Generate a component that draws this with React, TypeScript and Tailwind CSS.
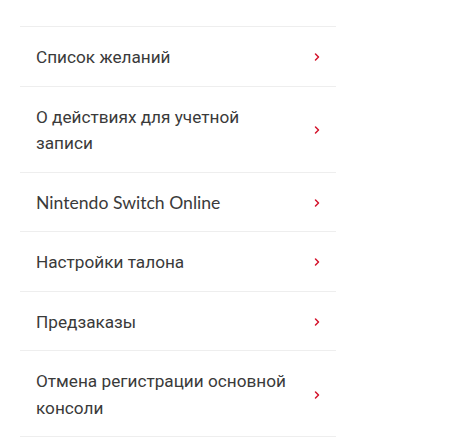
import { ChevronRight } from "lucide-react";

const items = [
  { label: "Список желаний", latin: false },
  { label: "О действиях для учетной записи", latin: false },
  { label: "Nintendo Switch Online", latin: true },
  { label: "Настройки талона", latin: false },
  { label: "Предзаказы", latin: false },
  { label: "Отмена регистрации основной консоли", latin: false },
];

export default function App() {
  return (
    <div className="min-h-screen bg-white pt-[26px] pl-5">
      <ul className="w-[316px] border-t border-[#eeeeee]">
        {items.map((item, i) => (
          <li
            key={i}
            className="flex items-center justify-between border-b border-[#eeeeee] pt-[17px] pb-[15px] pl-4 pr-[13px] cursor-pointer"
          >
            <span
              className={`max-w-[262px] leading-[26.5px] text-[#3a3a3a] ${
                item.latin
                  ? "font-['Lato',sans-serif] text-[17.6px]"
                  : "font-['Roboto',sans-serif] text-[17.2px]"
              }`}
            >
              {item.label}
            </span>
            <ChevronRight size={12} strokeWidth={3} className="text-[#d4142c]" />
          </li>
        ))}
      </ul>
    </div>
  );
}
